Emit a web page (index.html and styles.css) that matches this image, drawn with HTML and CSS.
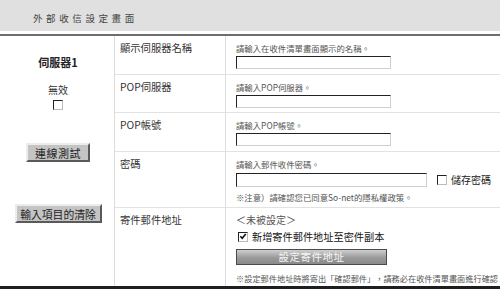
FILE: index.html
```html
<!DOCTYPE html>
<html lang="zh-Hant">
<head>
<meta charset="utf-8">
<title>外部收信設定畫面</title>
<link rel="stylesheet" href="styles.css">
</head>
<body>
<div class="page">
  <header class="head">
    <h1 class="title">外部收信設定畫面</h1>
  </header>
  <div class="rule"></div>
  <main class="form">
    <section class="side">
      <div class="server">伺服器1</div>
      <div class="invalid">無效</div>
      <span class="cb"></span>
      <button class="btn btn-test">連線測試</button>
      <button class="btn btn-clear">輸入項目的清除</button>
    </section>

    <div class="label r1">顯示伺服器名稱</div>
    <div class="field r1">
      <div class="hint">請輸入在收件清單畫面顯示的名稱。</div>
      <div class="input w154"></div>
    </div>

    <div class="label r2">POP伺服器</div>
    <div class="field r2">
      <div class="hint">請輸入POP伺服器。</div>
      <div class="input w154"></div>
    </div>

    <div class="label r3">POP帳號</div>
    <div class="field r3">
      <div class="hint">請輸入POP帳號。</div>
      <div class="input w154"></div>
    </div>

    <div class="label r4">密碼</div>
    <div class="field r4">
      <div class="hint">請輸入郵件收件密碼。</div>
      <div class="pwline">
        <div class="input w191"></div>
        <span class="cb"></span>
        <span class="save">儲存密碼</span>
      </div>
      <div class="hint note">※注意）請確認您已同意So-net的隱私權政策。</div>
    </div>

    <div class="label r5 last">寄件郵件地址</div>
    <div class="field r5 last">
      <div class="unset">＜未被設定＞</div>
      <div class="bccline">
        <span class="cb checked"><svg width="9" height="9" viewBox="0 0 9 9"><path d="M1.5 4.2 L3.6 6.6 L7.6 1.6" fill="none" stroke="#111" stroke-width="1.8"/></svg></span>
        <span class="bcc">新增寄件郵件地址至密件副本</span>
      </div>
      <button class="setbtn">設定寄件地址</button>
      <div class="hint note2">※設定郵件地址時將寄出「確認郵件」，請務必在收件清單畫面進行確認。</div>
    </div>
  </main>
  <div class="bottom"></div>
</div>
</body>
</html>
```
FILE: styles.css
```css
* { box-sizing: border-box; }
html, body { margin: 0; padding: 0; background: #fff; }
body {
  width: 500px;
  height: 290px;
  overflow: hidden;
  font-family: "Noto Sans CJK TC", "Liberation Sans", sans-serif;
  color: #333;
}
.page { width: 500px; }

.head {
  height: 31px;
  background: #e0e0e0;
  display: flex;
  align-items: center;
  padding-left: 33px;
  padding-top: 4px;
}
.title {
  margin: 0;
  font-size: 9.5px;
  font-weight: normal;
  letter-spacing: 3.6px;
  color: #444;
  line-height: 12px;
}
.rule {
  height: 5px;
  border-top: 3px solid #fff;
  background: #6e6e6e;
}

.form {
  display: grid;
  grid-template-columns: 115px 111px 1fr;
  grid-template-rows: 39px 38px 39px 56px 78px;
}

.side {
  grid-row: 1 / 6;
  grid-column: 1;
  border-right: 1px solid #dcdcdc;
  display: flex;
  flex-direction: column;
  align-items: center;
  padding-top: 19px;
  padding-left: 2px;
}
.server {
  font-size: 11px;
  font-weight: bold;
  line-height: 14px;
  color: #222;
}
.invalid {
  margin-top: 15px;
  font-size: 10px;
  line-height: 12px;
}
.side .cb { margin-top: 4px; }

.btn {
  font-family: inherit;
  font-size: 11px;
  line-height: 14px;
  color: #222;
  background: #c4c4c4;
  border: 2px solid;
  border-color: #ececec #5a5a5a #5a5a5a #ececec;
  padding: 0 4px;
  height: 19px;
  margin: 0;
  white-space: nowrap;
}
.btn-test { margin-top: 33px; width: 64px; letter-spacing: 0.5px; }
.btn-clear { margin-top: 42px; width: 87px; padding: 0 2px; font-size: 10.8px; }

.label {
  grid-column: 2;
  border-right: 1px solid #dcdcdc;
  border-bottom: 1px solid #e2e2e2;
  padding: 5px 0 0 5px;
  font-size: 10.3px;
  line-height: 14px;
  color: #333;
}
.field {
  grid-column: 3;
  border-bottom: 1px solid #e2e2e2;
  padding: 6px 0 0 10px;
  display: flex;
  flex-direction: column;
  align-items: flex-start;
  min-width: 0;
  overflow: hidden;
}
.last { border-bottom: none; }
.r1 { grid-row: 1; }
.r2 { grid-row: 2; }
.r3 { grid-row: 3; }
.r4 { grid-row: 4; }
.r5 { grid-row: 5; }

.hint {
  font-size: 8.4px;
  line-height: 12px;
  color: #555;
  white-space: nowrap;
}
.input {
  margin-top: 2px;
  height: 13px;
  background: #fff;
  border: 1px solid;
  border-color: #222 #cfcfcf #cfcfcf #222;
}
.w154 { width: 155px; }
.w191 { width: 191px; height: 14px; margin-top: 0; }

.pwline {
  margin-top: 3px;
  display: flex;
  align-items: center;
}
.pwline .cb { margin-left: 10px; }
.save {
  margin-left: 4px;
  font-size: 10px;
  line-height: 12px;
  color: #222;
}
.note { margin-top: 4px; }

.cb {
  display: inline-flex;
  align-items: center;
  justify-content: center;
  width: 10px;
  height: 10px;
  background: #fff;
  border: 1px solid;
  border-color: #222 #bbb #bbb #222;
  flex: none;
}
.cb svg { display: block; }

.unset {
  font-size: 10px;
  line-height: 12px;
  color: #555;
}
.bccline {
  margin-top: 4px;
  display: flex;
  align-items: center;
  padding-left: 2px;
}
.bcc {
  margin-left: 4px;
  font-size: 10.2px;
  line-height: 13px;
  color: #111;
}
.setbtn {
  margin-top: 6px;
  width: 151px;
  height: 16px;
  padding: 0;
  font-family: inherit;
  font-size: 10.5px;
  line-height: 14px;
  letter-spacing: 0.5px;
  color: #f6f6f6;
  background: linear-gradient(#cfcfcf, #9a9a9a 55%, #8a8a8a);
  border: 1px solid #4a4a4a;
}
.note2 { margin-top: 7px; font-size: 8.2px; }

.bottom {
  height: 3px;
  background: #1e1e1e;
}
```
